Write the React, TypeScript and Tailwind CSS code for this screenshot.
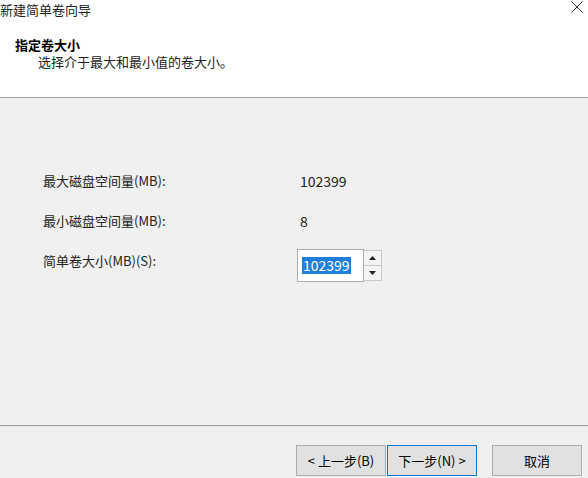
import React from "react";

const font = { fontFamily: '"Noto Sans CJK SC", "Noto Sans", sans-serif' };

function Btn({ children, primary }: { children: React.ReactNode; primary?: boolean }) {
  return (
    <div
      className={
        "w-[90px] h-[31px] flex items-center justify-center text-[13px] text-black bg-[#e1e1e1] border " +
        (primary ? "border-[#0078d7]" : "border-[#adadad]")
      }
    >
      {children}
    </div>
  );
}

export default function App() {
  return (
    <div className="w-[588px] h-[478px] flex flex-col bg-[#f0f0f0] overflow-hidden" style={font}>
      <div className="h-[98px] bg-white border-b border-[#a0a0a0] flex flex-col">
        <div className="flex items-start justify-between h-[20px]">
          <div className="text-[13px] leading-[20px] text-[#222] pl-0">新建简单卷向导</div>
          <svg width="12" height="12" viewBox="0 0 12 12" className="mt-[1px] mr-[5px]">
            <path d="M0.5 0.5 L11.5 11.5 M11.5 0.5 L0.5 11.5" stroke="#333" strokeWidth="1" />
          </svg>
        </div>
        <div className="pl-[15px] mt-[15px] text-[13px] leading-[20px] font-bold text-black">指定卷大小</div>
        <div className="pl-[38px] mt-[-3px] text-[13px] leading-[20px] text-[#222]">选择介于最大和最小值的卷大小。</div>
      </div>
      <div className="flex-1 pt-[63px] pl-[43px] text-[13px] text-[#222]">
        <div className="flex h-[40px] items-center">
          <div className="w-[257px]">最大磁盘空间量(MB):</div>
          <div className="text-[14px]">102399</div>
        </div>
        <div className="flex h-[40px] items-center">
          <div className="w-[257px]">最小磁盘空间量(MB):</div>
          <div className="text-[14px]">8</div>
        </div>
        <div className="flex h-[40px] items-start">
          <div className="w-[254px] leading-[40px]">简单卷大小(MB)(S):</div>
          <div className="flex mt-[8px]">
            <div className="w-[67px] h-[33px] bg-white border border-[#adadad] flex items-center pl-[4px]">
              <span className="bg-[#1f7fdc] text-white text-[14px] leading-[17px] px-[1px]">102399</span>
            </div>
            <div className="w-[18px] h-[31px] mt-[1px] flex flex-col border border-l-0 border-[#c8c8c8] bg-[#f4f4f4]">
              <div className="flex-1 flex items-center justify-center border-b border-[#c8c8c8]">
                <svg width="7" height="4" viewBox="0 0 7 4"><path d="M3.5 0 L7 4 L0 4 Z" fill="#222" /></svg>
              </div>
              <div className="flex-1 flex items-center justify-center">
                <svg width="7" height="4" viewBox="0 0 7 4"><path d="M0 0 L7 0 L3.5 4 Z" fill="#222" /></svg>
              </div>
            </div>
          </div>
        </div>
      </div>
      <div className="h-[53px] border-t border-[#a0a0a0] flex flex-col">
        <div className="h-px bg-[#e6e6e6]" />
        <div className="flex justify-end pr-[6px] pt-[18px]">
          <Btn>&lt; 上一步(B)</Btn>
          <div className="w-px" />
          <Btn primary>下一步(N) &gt;</Btn>
          <div className="w-[15px]" />
          <Btn>取消</Btn>
        </div>
      </div>
    </div>
  );
}
